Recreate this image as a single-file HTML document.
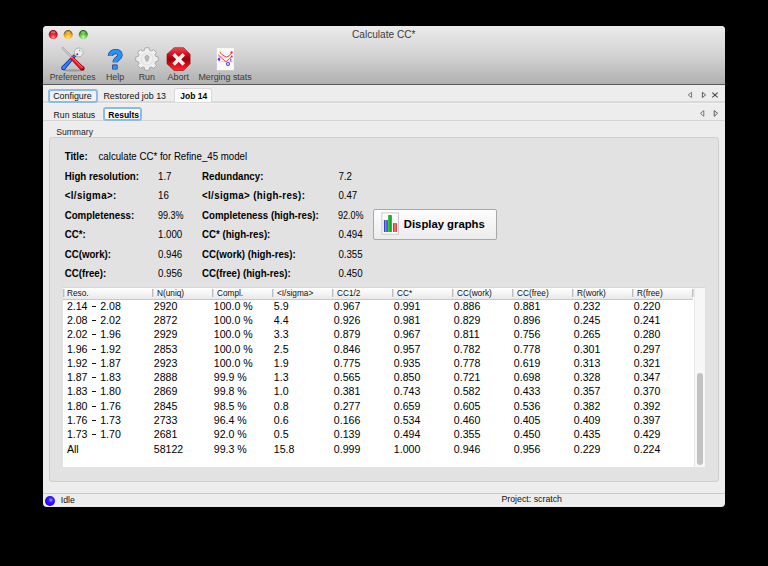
<!DOCTYPE html>
<html><head><meta charset="utf-8">
<style>
html,body{margin:0;padding:0;}
body{width:768px;height:566px;background:#000;position:relative;overflow:hidden;font-family:"Liberation Sans",sans-serif;}
.t{position:absolute;white-space:nowrap;}
.abs{position:absolute;}
#win{position:absolute;left:43px;top:26px;width:682px;height:481px;background:#ededed;border-radius:4px;overflow:hidden;}
#tb{position:absolute;left:0;top:0;width:682px;height:58px;background:linear-gradient(#ebebeb,#d3d3d3 50%,#b0b0b0);border-bottom:1px solid #5a5a5a;}
.light{position:absolute;top:4px;width:10px;height:10px;border-radius:50%;}
.sep{position:absolute;top:289px;width:2px;height:8px;background:linear-gradient(90deg,#bdbdbd 50%,#dcdcdc 50%);}
</style></head><body>
<div id="win"></div>
<div id="tb" style="left:43px;top:26px;border-radius:4px 4px 0 0;"></div>
<!-- traffic lights -->
<svg class="abs" style="left:46px;top:28px" width="44" height="13" viewBox="0 0 44 13">
  <defs>
    <radialGradient id="gr" cx="0.5" cy="0.78" r="0.62"><stop offset="0" stop-color="#ffb0b4"/><stop offset="0.45" stop-color="#ff2535"/><stop offset="0.85" stop-color="#d8101e"/><stop offset="1" stop-color="#8a1020"/></radialGradient>
    <radialGradient id="go" cx="0.5" cy="0.78" r="0.62"><stop offset="0" stop-color="#fff09a"/><stop offset="0.45" stop-color="#ffbe2a"/><stop offset="0.85" stop-color="#e0900a"/><stop offset="1" stop-color="#8a5a10"/></radialGradient>
    <radialGradient id="gg" cx="0.5" cy="0.78" r="0.62"><stop offset="0" stop-color="#d8f8b8"/><stop offset="0.45" stop-color="#72d44e"/><stop offset="0.85" stop-color="#3aa02a"/><stop offset="1" stop-color="#2a6a1c"/></radialGradient>
  </defs>
  <circle cx="7.2" cy="6.6" r="4.5" fill="url(#gr)"/>
  <ellipse cx="7.2" cy="4.3" rx="2.4" ry="1.3" fill="#ffe0e0" opacity="0.4"/>
  <circle cx="22.2" cy="6.6" r="4.5" fill="url(#go)"/>
  <ellipse cx="22.2" cy="4.3" rx="2.4" ry="1.3" fill="#fff6d0" opacity="0.4"/>
  <circle cx="37.25" cy="6.6" r="4.5" fill="url(#gg)"/>
  <ellipse cx="37.25" cy="4.3" rx="2.4" ry="1.3" fill="#eaffe0" opacity="0.4"/>
</svg>
<!-- toolbar icons -->
<svg class="abs" style="left:58px;top:44px" width="30" height="30" viewBox="0 0 30 30">
  <ellipse cx="15" cy="26.4" rx="9.5" ry="1.1" fill="#7a7a7a" opacity="0.55"/>
  <line x1="4" y1="3.4" x2="13.5" y2="13" stroke="#8c8c8c" stroke-width="1.9"/>
  <line x1="4" y1="3.4" x2="13.5" y2="13" stroke="#ffffff" stroke-width="0.9"/>
  <polygon points="15.89,10.19 3.77,22.52 7.03,25.48 18.11,12.21" fill="#0a2c9a"/>
  <circle cx="5.4" cy="24.0" r="2.2" fill="#0a2c9a"/>
  <polygon points="16.17,10.93 4.49,22.79 6.71,24.81 17.43,12.07" fill="#2f7df2"/>
  <circle cx="5.6" cy="23.8" r="1.5" fill="#3a8cff"/>
  <circle cx="20.8" cy="8.4" r="4.4" fill="#ececec" stroke="#9a9a9a" stroke-width="0.7"/>
  <polygon points="21.2,8.0 25.8,2.8 27.2,6.4" fill="#d4d4d4"/>
  <circle cx="19.3" cy="10.2" r="1.0" fill="#505050"/>
  <circle cx="21.5" cy="6.4" r="0.6" fill="#888"/>
  <polygon points="11.67,14.13 22.81,26.19 25.99,23.01 13.93,11.87" fill="#9a0010"/>
  <circle cx="24.4" cy="24.6" r="2.25" fill="#9a0010"/>
  <polygon points="12.29,13.91 23.10,25.50 25.30,23.30 13.71,12.49" fill="#ee1a2a"/>
  <line x1="13.6" y1="12.9" x2="24.8" y2="24.1" stroke="#ffb0b5" stroke-width="0.6"/>
  <line x1="12.2" y1="14.2" x2="14.2" y2="12.2" stroke="#ffd0d0" stroke-width="0.8"/>
</svg>
<svg class="abs" style="left:100px;top:44px" width="30" height="30" viewBox="0 0 30 30">
  <path d="M10.4 11.9 C10.4 6.6 20.1 6.0 20.1 10.9 C20.1 14.4 15.1 14.2 15.1 18.3" fill="none" stroke="#25307a" stroke-width="5.2"/>
  <rect x="12.2" y="20.5" width="5.4" height="5.1" rx="0.6" fill="#25307a"/>
  <path d="M10.4 11.9 C10.4 6.6 20.1 6.0 20.1 10.9 C20.1 14.4 15.1 14.2 15.1 18.3" fill="none" stroke="#2594fa" stroke-width="4.0"/>
  <rect x="12.9" y="21.2" width="4.0" height="3.7" rx="0.4" fill="#2594fa"/>
</svg>
<svg class="abs" style="left:132px;top:44px" width="30" height="30" viewBox="0 0 30 30">
  <path d="M12.37 6.39 L13.02 3.77 L16.98 3.77 L17.63 6.39 L19.23 7.05 L21.54 5.66 L24.34 8.46 L22.95 10.77 L23.61 12.37 L26.23 13.02 L26.23 16.98 L23.61 17.63 L22.95 19.23 L24.34 21.54 L21.54 24.34 L19.23 22.95 L17.63 23.61 L16.98 26.23 L13.02 26.23 L12.37 23.61 L10.77 22.95 L8.46 24.34 L5.66 21.54 L7.05 19.23 L6.39 17.63 L3.77 16.98 L3.77 13.02 L6.39 12.37 L7.05 10.77 L5.66 8.46 L8.46 5.66 L10.77 7.05 Z" fill="#efefef" stroke="#9c9c9c" stroke-width="0.8" stroke-linejoin="round"/>
  <circle cx="15" cy="15" r="6" fill="none" stroke="#e2e2e2" stroke-width="1.2"/>
  <path d="M13.0 14.0 A2.1 2.1 0 1 1 17.0 14.0 L15.8 17.2 L14.2 17.2 Z" fill="#bcbcbc" stroke="#959595" stroke-width="0.5"/>
</svg>
<svg class="abs" style="left:164px;top:44px" width="30" height="30" viewBox="0 0 30 30">
  <defs>
    <linearGradient id="ab" x1="0" y1="0" x2="0" y2="1"><stop offset="0" stop-color="#e9505a"/><stop offset="0.25" stop-color="#e01020"/><stop offset="0.5" stop-color="#9a0008"/><stop offset="0.75" stop-color="#e00a14"/><stop offset="1" stop-color="#ff2a2a"/></linearGradient>
  </defs>
  <polygon points="10.2,3.7 19.6,3.7 26.1,10.2 26.1,19.8 19.6,26.5 10.2,26.5 3.0,19.8 3.0,10.2" fill="url(#ab)" stroke="#8a0a0a" stroke-width="0.6"/>
  <path d="M9.6 10.2 L19.8 20.6 M19.8 10.2 L9.6 20.6" stroke="#f4f4f4" stroke-width="3.6"/>
</svg>
<svg class="abs" style="left:210px;top:44px" width="30" height="30" viewBox="0 0 30 30">
  <rect x="6.9" y="4" width="17" height="22.2" fill="#f9f9f9"/>
  <line x1="7.5" y1="12.8" x2="23" y2="12.8" stroke="#d0d0d0" stroke-width="0.7"/>
  <line x1="9" y1="17.6" x2="23" y2="17.6" stroke="#d0d0d0" stroke-width="0.7"/>
  <polyline points="9.8,7.6 11.5,10.2 14,11.8 16.5,13.2 19,11.8 22,8.6" fill="none" stroke="#ff2020" stroke-width="0.9"/>
  <circle cx="21.6" cy="8.4" r="1.1" fill="#ff2020"/>
  <polyline points="8.2,10.8 11,13.5 15.8,17.8 19.5,14.8 21.8,12.5" fill="none" stroke="#ff2020" stroke-width="0.9"/>
  <circle cx="21.7" cy="12.4" r="0.9" fill="#ff2020"/>
  <circle cx="9" cy="15.3" r="1.2" fill="#6030ff"/>
  <rect x="8.6" y="13.6" width="1.2" height="3.2" fill="#6030ff"/>
  <rect x="20.3" y="14.6" width="1" height="3" fill="#6030ff"/>
  <circle cx="18" cy="20" r="1.5" fill="none" stroke="#6030ff" stroke-width="1.1"/>
</svg>

<!-- toolbar labels -->

<!-- tab rows -->
<div class="abs" style="left:43px;top:101px;width:682px;height:2px;background:#dadada;"></div>
<div class="abs" style="left:43px;top:103px;width:682px;height:1px;background:#f2f2f2;"></div>
<div class="abs" style="left:43px;top:120px;width:682px;height:1px;background:#d4d4d4;"></div>
<div class="abs" style="left:48px;top:88.6px;width:49.5px;height:14px;box-sizing:border-box;border:2px solid #8dbbe8;border-radius:3px;background:#f0f0f0;"></div>
<div class="abs" style="left:173.5px;top:87.5px;width:36px;height:13.5px;background:#fdfdfd;border:1px solid #d9d9d9;border-bottom:none;border-radius:3px 3px 0 0;"></div>
<div class="abs" style="left:103px;top:107.4px;width:39.3px;height:14px;box-sizing:border-box;border:2px solid #8dbbe8;border-radius:3px;background:#fbfbfb;"></div>


<svg class="abs" style="left:680px;top:86px" width="45" height="36" viewBox="0 0 45 36">
  <path d="M11.6 6.3 L8.2 8.9 L11.6 11.6 Z" fill="none" stroke="#7a7a7a" stroke-width="1"/>
  <path d="M22.4 6.3 L25.6 8.9 L22.4 11.6 Z" fill="none" stroke="#555" stroke-width="0.95"/>
  <path d="M32.3 6.6 L37.7 11.4 M37.7 6.6 L32.3 11.4" stroke="#444" stroke-width="1.05"/>
  <path d="M23.8 24.6 L20.4 27.3 L23.8 30.3 Z" fill="none" stroke="#7a7a7a" stroke-width="1"/>
  <path d="M34.2 24.6 L37.6 27.3 L34.2 30.3 Z" fill="none" stroke="#555" stroke-width="0.95"/>
</svg>

<!-- panel -->
<div class="abs" style="left:49px;top:137px;width:668px;height:342.5px;background:#e2e2e2;border:1px solid #cfcfcf;border-radius:3px;"></div>

<div class="t" style="left:64.70px;top:152px;font-size:9.7px;line-height:9.7px;font-weight:bold;color:#000;transform-origin:0 8px;transform:scale(1,1.13);">Title:</div>
<div class="t" style="left:98.50px;top:152px;font-size:9.7px;line-height:9.7px;color:#000;transform-origin:0 8px;transform:scale(1,1.13);">calculate CC* for Refine_45 model</div>
<div class="t" style="left:64.70px;top:172px;font-size:9.7px;line-height:9.7px;font-weight:bold;color:#000;transform-origin:0 8px;transform:scale(1,1.13);">High resolution:</div>
<div class="t" style="left:158.00px;top:172px;font-size:9.7px;line-height:9.7px;color:#000;transform-origin:0 8px;transform:scale(1,1.13);">1.7</div>
<div class="t" style="left:202.00px;top:172px;font-size:9.7px;line-height:9.7px;font-weight:bold;color:#000;transform-origin:0 8px;transform:scale(1,1.13);">Redundancy:</div>
<div class="t" style="left:338.40px;top:172px;font-size:9.7px;line-height:9.7px;color:#000;transform-origin:0 8px;transform:scale(1,1.13);">7.2</div>
<div class="t" style="left:64.70px;top:191px;font-size:9.7px;line-height:9.7px;font-weight:bold;color:#000;transform-origin:0 8px;transform:scale(1,1.13);letter-spacing:0.4px;">&lt;I/sigma&gt;:</div>
<div class="t" style="left:158.00px;top:191px;font-size:9.7px;line-height:9.7px;color:#000;transform-origin:0 8px;transform:scale(1,1.13);">16</div>
<div class="t" style="left:202.00px;top:191px;font-size:9.7px;line-height:9.7px;font-weight:bold;color:#000;transform-origin:0 8px;transform:scale(1,1.13);letter-spacing:0.38px;">&lt;I/sigma&gt; (high-res):</div>
<div class="t" style="left:338.40px;top:191px;font-size:9.7px;line-height:9.7px;color:#000;transform-origin:0 8px;transform:scale(1,1.13);">0.47</div>
<div class="t" style="left:64.70px;top:211px;font-size:9.7px;line-height:9.7px;font-weight:bold;color:#000;transform-origin:0 8px;transform:scale(1,1.13);">Completeness:</div>
<div class="t" style="left:158.00px;top:211px;font-size:9.7px;line-height:9.7px;color:#000;transform-origin:0 8px;transform:scale(0.93,1.13);">99.3%</div>
<div class="t" style="left:202.00px;top:211px;font-size:9.7px;line-height:9.7px;font-weight:bold;color:#000;transform-origin:0 8px;transform:scale(1,1.13);">Completeness (high-res):</div>
<div class="t" style="left:338.40px;top:211px;font-size:9.7px;line-height:9.7px;color:#000;transform-origin:0 8px;transform:scale(0.93,1.13);">92.0%</div>
<div class="t" style="left:64.70px;top:230px;font-size:9.7px;line-height:9.7px;font-weight:bold;color:#000;transform-origin:0 8px;transform:scale(1,1.13);">CC*:</div>
<div class="t" style="left:158.00px;top:230px;font-size:9.7px;line-height:9.7px;color:#000;transform-origin:0 8px;transform:scale(1,1.13);">1.000</div>
<div class="t" style="left:202.00px;top:230px;font-size:9.7px;line-height:9.7px;font-weight:bold;color:#000;transform-origin:0 8px;transform:scale(1,1.13);">CC* (high-res):</div>
<div class="t" style="left:338.40px;top:230px;font-size:9.7px;line-height:9.7px;color:#000;transform-origin:0 8px;transform:scale(1,1.13);">0.494</div>
<div class="t" style="left:64.70px;top:250px;font-size:9.7px;line-height:9.7px;font-weight:bold;color:#000;transform-origin:0 8px;transform:scale(1,1.13);">CC(work):</div>
<div class="t" style="left:158.00px;top:250px;font-size:9.7px;line-height:9.7px;color:#000;transform-origin:0 8px;transform:scale(1,1.13);">0.946</div>
<div class="t" style="left:202.00px;top:250px;font-size:9.7px;line-height:9.7px;font-weight:bold;color:#000;transform-origin:0 8px;transform:scale(1,1.13);">CC(work) (high-res):</div>
<div class="t" style="left:338.40px;top:250px;font-size:9.7px;line-height:9.7px;color:#000;transform-origin:0 8px;transform:scale(1,1.13);">0.355</div>
<div class="t" style="left:64.70px;top:269px;font-size:9.7px;line-height:9.7px;font-weight:bold;color:#000;transform-origin:0 8px;transform:scale(1,1.13);">CC(free):</div>
<div class="t" style="left:158.00px;top:269px;font-size:9.7px;line-height:9.7px;color:#000;transform-origin:0 8px;transform:scale(1,1.13);">0.956</div>
<div class="t" style="left:202.00px;top:269px;font-size:9.7px;line-height:9.7px;font-weight:bold;color:#000;transform-origin:0 8px;transform:scale(1,1.13);">CC(free) (high-res):</div>
<div class="t" style="left:338.40px;top:269px;font-size:9.7px;line-height:9.7px;color:#000;transform-origin:0 8px;transform:scale(1,1.13);">0.450</div>


<!-- display graphs button -->
<div class="abs" style="left:373.4px;top:209px;width:121.5px;height:29px;border:1px solid #a8a8a8;border-radius:2px;background:linear-gradient(#fdfdfd,#ececec);"></div>


<svg class="abs" style="left:376px;top:208px" width="30" height="32" viewBox="0 0 30 32">
  <defs>
    <linearGradient id="bb" x1="0" x2="1"><stop offset="0" stop-color="#1a22a8"/><stop offset="0.45" stop-color="#7a8cff"/><stop offset="1" stop-color="#1a22c0"/></linearGradient>
    <linearGradient id="bg2" x1="0" x2="1"><stop offset="0" stop-color="#10b020"/><stop offset="0.3" stop-color="#30e040"/><stop offset="0.5" stop-color="#0a4a10"/><stop offset="0.7" stop-color="#30e040"/><stop offset="1" stop-color="#10b020"/></linearGradient>
    <linearGradient id="br" x1="0" x2="1"><stop offset="0" stop-color="#e00a0a"/><stop offset="0.5" stop-color="#ff8a8a"/><stop offset="1" stop-color="#e00a0a"/></linearGradient>
  </defs>
  <rect x="5.9" y="4.9" width="16.6" height="21.3" fill="#fff" stroke="#c8c8c8" stroke-width="1"/>
  <line x1="7" y1="8" x2="21.5" y2="8" stroke="#e6e6e6" stroke-width="0.6"/>
  <line x1="7" y1="12" x2="21.5" y2="12" stroke="#e6e6e6" stroke-width="0.6"/>
  <line x1="7" y1="16" x2="21.5" y2="16" stroke="#e6e6e6" stroke-width="0.6"/>
  <rect x="7.9" y="11.9" width="3.9" height="12.1" rx="0.6" fill="url(#bb)"/>
  <rect x="12.1" y="7.1" width="3.9" height="16.9" rx="0.6" fill="url(#bg2)"/>
  <rect x="17" y="15" width="3.9" height="9" rx="0.6" fill="url(#br)"/>
</svg>

<!-- table -->
<div class="abs" style="left:62.7px;top:287.5px;width:642px;height:179px;background:#fff;"></div>
<div class="abs" style="left:62.7px;top:287px;width:642px;height:1px;background:#d6d6d6;"></div>
<div class="abs" style="left:62.7px;top:288px;width:630px;height:10.5px;background:linear-gradient(#fff,#e9e9e9);border-bottom:1px solid #c8c8c8;"></div>
<div class="abs" style="left:694px;top:287.5px;width:10px;height:179px;background:#f7f7f7;border-left:1px solid #e8e8e8;"></div>
<div class="abs" style="left:697px;top:373px;width:6px;height:91.5px;background:#c2c2c2;border-radius:3px;"></div>
<div class="t" style="left:67.20px;top:289px;font-size:8.6px;line-height:8.6px;color:#111;transform-origin:0 7px;transform:scale(0.96,1.0);">Reso.</div>
<div class="sep" style="left:63.0px"></div>
<div class="t" style="left:156.70px;top:289px;font-size:8.6px;line-height:8.6px;color:#111;transform-origin:0 7px;transform:scale(0.96,1.0);">N(uniq)</div>
<div class="sep" style="left:152.3px"></div>
<div class="t" style="left:216.70px;top:289px;font-size:8.6px;line-height:8.6px;color:#111;transform-origin:0 7px;transform:scale(0.96,1.0);">Compl.</div>
<div class="sep" style="left:212.3px"></div>
<div class="t" style="left:276.70px;top:289px;font-size:8.6px;line-height:8.6px;color:#111;transform-origin:0 7px;transform:scale(0.96,1.0);">&lt;I/sigma&gt;</div>
<div class="sep" style="left:272.3px"></div>
<div class="t" style="left:336.70px;top:289px;font-size:8.6px;line-height:8.6px;color:#111;transform-origin:0 7px;transform:scale(0.96,1.0);">CC1/2</div>
<div class="sep" style="left:332.3px"></div>
<div class="t" style="left:396.70px;top:289px;font-size:8.6px;line-height:8.6px;color:#111;transform-origin:0 7px;transform:scale(0.96,1.0);">CC*</div>
<div class="sep" style="left:392.3px"></div>
<div class="t" style="left:456.70px;top:289px;font-size:8.6px;line-height:8.6px;color:#111;transform-origin:0 7px;transform:scale(0.96,1.0);">CC(work)</div>
<div class="sep" style="left:452.3px"></div>
<div class="t" style="left:516.70px;top:289px;font-size:8.6px;line-height:8.6px;color:#111;transform-origin:0 7px;transform:scale(0.96,1.0);">CC(free)</div>
<div class="sep" style="left:512.3px"></div>
<div class="t" style="left:576.70px;top:289px;font-size:8.6px;line-height:8.6px;color:#111;transform-origin:0 7px;transform:scale(0.96,1.0);">R(work)</div>
<div class="sep" style="left:572.3px"></div>
<div class="t" style="left:636.70px;top:289px;font-size:8.6px;line-height:8.6px;color:#111;transform-origin:0 7px;transform:scale(0.96,1.0);">R(free)</div>
<div class="sep" style="left:632.3px"></div>
<div class="sep" style="left:691.6px"></div>
<div class="t" style="left:66.90px;top:301px;font-size:10.6px;line-height:10.6px;color:#000;">2.14<span style="display:inline-block;width:4.3px;height:1.2px;background:#111;vertical-align:3.1px;margin:0 4.3px 0 4.1px"></span>2.08</div>
<div class="t" style="left:153.80px;top:301px;font-size:10.6px;line-height:10.6px;color:#000;">2920</div>
<div class="t" style="left:213.80px;top:301px;font-size:10.6px;line-height:10.6px;color:#000;">100.0 %</div>
<div class="t" style="left:273.80px;top:301px;font-size:10.6px;line-height:10.6px;color:#000;">5.9</div>
<div class="t" style="left:333.80px;top:301px;font-size:10.6px;line-height:10.6px;color:#000;">0.967</div>
<div class="t" style="left:393.80px;top:301px;font-size:10.6px;line-height:10.6px;color:#000;">0.991</div>
<div class="t" style="left:453.80px;top:301px;font-size:10.6px;line-height:10.6px;color:#000;">0.886</div>
<div class="t" style="left:513.80px;top:301px;font-size:10.6px;line-height:10.6px;color:#000;">0.881</div>
<div class="t" style="left:573.80px;top:301px;font-size:10.6px;line-height:10.6px;color:#000;">0.232</div>
<div class="t" style="left:633.80px;top:301px;font-size:10.6px;line-height:10.6px;color:#000;">0.220</div>
<div class="t" style="left:66.90px;top:315px;font-size:10.6px;line-height:10.6px;color:#000;">2.08<span style="display:inline-block;width:4.3px;height:1.2px;background:#111;vertical-align:3.1px;margin:0 4.3px 0 4.1px"></span>2.02</div>
<div class="t" style="left:153.80px;top:315px;font-size:10.6px;line-height:10.6px;color:#000;">2872</div>
<div class="t" style="left:213.80px;top:315px;font-size:10.6px;line-height:10.6px;color:#000;">100.0 %</div>
<div class="t" style="left:273.80px;top:315px;font-size:10.6px;line-height:10.6px;color:#000;">4.4</div>
<div class="t" style="left:333.80px;top:315px;font-size:10.6px;line-height:10.6px;color:#000;">0.926</div>
<div class="t" style="left:393.80px;top:315px;font-size:10.6px;line-height:10.6px;color:#000;">0.981</div>
<div class="t" style="left:453.80px;top:315px;font-size:10.6px;line-height:10.6px;color:#000;">0.829</div>
<div class="t" style="left:513.80px;top:315px;font-size:10.6px;line-height:10.6px;color:#000;">0.896</div>
<div class="t" style="left:573.80px;top:315px;font-size:10.6px;line-height:10.6px;color:#000;">0.245</div>
<div class="t" style="left:633.80px;top:315px;font-size:10.6px;line-height:10.6px;color:#000;">0.241</div>
<div class="t" style="left:66.90px;top:329px;font-size:10.6px;line-height:10.6px;color:#000;">2.02<span style="display:inline-block;width:4.3px;height:1.2px;background:#111;vertical-align:3.1px;margin:0 4.3px 0 4.1px"></span>1.96</div>
<div class="t" style="left:153.80px;top:329px;font-size:10.6px;line-height:10.6px;color:#000;">2929</div>
<div class="t" style="left:213.80px;top:329px;font-size:10.6px;line-height:10.6px;color:#000;">100.0 %</div>
<div class="t" style="left:273.80px;top:329px;font-size:10.6px;line-height:10.6px;color:#000;">3.3</div>
<div class="t" style="left:333.80px;top:329px;font-size:10.6px;line-height:10.6px;color:#000;">0.879</div>
<div class="t" style="left:393.80px;top:329px;font-size:10.6px;line-height:10.6px;color:#000;">0.967</div>
<div class="t" style="left:453.80px;top:329px;font-size:10.6px;line-height:10.6px;color:#000;">0.811</div>
<div class="t" style="left:513.80px;top:329px;font-size:10.6px;line-height:10.6px;color:#000;">0.756</div>
<div class="t" style="left:573.80px;top:329px;font-size:10.6px;line-height:10.6px;color:#000;">0.265</div>
<div class="t" style="left:633.80px;top:329px;font-size:10.6px;line-height:10.6px;color:#000;">0.280</div>
<div class="t" style="left:66.90px;top:344px;font-size:10.6px;line-height:10.6px;color:#000;">1.96<span style="display:inline-block;width:4.3px;height:1.2px;background:#111;vertical-align:3.1px;margin:0 4.3px 0 4.1px"></span>1.92</div>
<div class="t" style="left:153.80px;top:344px;font-size:10.6px;line-height:10.6px;color:#000;">2853</div>
<div class="t" style="left:213.80px;top:344px;font-size:10.6px;line-height:10.6px;color:#000;">100.0 %</div>
<div class="t" style="left:273.80px;top:344px;font-size:10.6px;line-height:10.6px;color:#000;">2.5</div>
<div class="t" style="left:333.80px;top:344px;font-size:10.6px;line-height:10.6px;color:#000;">0.846</div>
<div class="t" style="left:393.80px;top:344px;font-size:10.6px;line-height:10.6px;color:#000;">0.957</div>
<div class="t" style="left:453.80px;top:344px;font-size:10.6px;line-height:10.6px;color:#000;">0.782</div>
<div class="t" style="left:513.80px;top:344px;font-size:10.6px;line-height:10.6px;color:#000;">0.778</div>
<div class="t" style="left:573.80px;top:344px;font-size:10.6px;line-height:10.6px;color:#000;">0.301</div>
<div class="t" style="left:633.80px;top:344px;font-size:10.6px;line-height:10.6px;color:#000;">0.297</div>
<div class="t" style="left:66.90px;top:358px;font-size:10.6px;line-height:10.6px;color:#000;">1.92<span style="display:inline-block;width:4.3px;height:1.2px;background:#111;vertical-align:3.1px;margin:0 4.3px 0 4.1px"></span>1.87</div>
<div class="t" style="left:153.80px;top:358px;font-size:10.6px;line-height:10.6px;color:#000;">2923</div>
<div class="t" style="left:213.80px;top:358px;font-size:10.6px;line-height:10.6px;color:#000;">100.0 %</div>
<div class="t" style="left:273.80px;top:358px;font-size:10.6px;line-height:10.6px;color:#000;">1.9</div>
<div class="t" style="left:333.80px;top:358px;font-size:10.6px;line-height:10.6px;color:#000;">0.775</div>
<div class="t" style="left:393.80px;top:358px;font-size:10.6px;line-height:10.6px;color:#000;">0.935</div>
<div class="t" style="left:453.80px;top:358px;font-size:10.6px;line-height:10.6px;color:#000;">0.778</div>
<div class="t" style="left:513.80px;top:358px;font-size:10.6px;line-height:10.6px;color:#000;">0.619</div>
<div class="t" style="left:573.80px;top:358px;font-size:10.6px;line-height:10.6px;color:#000;">0.313</div>
<div class="t" style="left:633.80px;top:358px;font-size:10.6px;line-height:10.6px;color:#000;">0.321</div>
<div class="t" style="left:66.90px;top:372px;font-size:10.6px;line-height:10.6px;color:#000;">1.87<span style="display:inline-block;width:4.3px;height:1.2px;background:#111;vertical-align:3.1px;margin:0 4.3px 0 4.1px"></span>1.83</div>
<div class="t" style="left:153.80px;top:372px;font-size:10.6px;line-height:10.6px;color:#000;">2888</div>
<div class="t" style="left:213.80px;top:372px;font-size:10.6px;line-height:10.6px;color:#000;">99.9 %</div>
<div class="t" style="left:273.80px;top:372px;font-size:10.6px;line-height:10.6px;color:#000;">1.3</div>
<div class="t" style="left:333.80px;top:372px;font-size:10.6px;line-height:10.6px;color:#000;">0.565</div>
<div class="t" style="left:393.80px;top:372px;font-size:10.6px;line-height:10.6px;color:#000;">0.850</div>
<div class="t" style="left:453.80px;top:372px;font-size:10.6px;line-height:10.6px;color:#000;">0.721</div>
<div class="t" style="left:513.80px;top:372px;font-size:10.6px;line-height:10.6px;color:#000;">0.698</div>
<div class="t" style="left:573.80px;top:372px;font-size:10.6px;line-height:10.6px;color:#000;">0.328</div>
<div class="t" style="left:633.80px;top:372px;font-size:10.6px;line-height:10.6px;color:#000;">0.347</div>
<div class="t" style="left:66.90px;top:386px;font-size:10.6px;line-height:10.6px;color:#000;">1.83<span style="display:inline-block;width:4.3px;height:1.2px;background:#111;vertical-align:3.1px;margin:0 4.3px 0 4.1px"></span>1.80</div>
<div class="t" style="left:153.80px;top:386px;font-size:10.6px;line-height:10.6px;color:#000;">2869</div>
<div class="t" style="left:213.80px;top:386px;font-size:10.6px;line-height:10.6px;color:#000;">99.8 %</div>
<div class="t" style="left:273.80px;top:386px;font-size:10.6px;line-height:10.6px;color:#000;">1.0</div>
<div class="t" style="left:333.80px;top:386px;font-size:10.6px;line-height:10.6px;color:#000;">0.381</div>
<div class="t" style="left:393.80px;top:386px;font-size:10.6px;line-height:10.6px;color:#000;">0.743</div>
<div class="t" style="left:453.80px;top:386px;font-size:10.6px;line-height:10.6px;color:#000;">0.582</div>
<div class="t" style="left:513.80px;top:386px;font-size:10.6px;line-height:10.6px;color:#000;">0.433</div>
<div class="t" style="left:573.80px;top:386px;font-size:10.6px;line-height:10.6px;color:#000;">0.357</div>
<div class="t" style="left:633.80px;top:386px;font-size:10.6px;line-height:10.6px;color:#000;">0.370</div>
<div class="t" style="left:66.90px;top:401px;font-size:10.6px;line-height:10.6px;color:#000;">1.80<span style="display:inline-block;width:4.3px;height:1.2px;background:#111;vertical-align:3.1px;margin:0 4.3px 0 4.1px"></span>1.76</div>
<div class="t" style="left:153.80px;top:401px;font-size:10.6px;line-height:10.6px;color:#000;">2845</div>
<div class="t" style="left:213.80px;top:401px;font-size:10.6px;line-height:10.6px;color:#000;">98.5 %</div>
<div class="t" style="left:273.80px;top:401px;font-size:10.6px;line-height:10.6px;color:#000;">0.8</div>
<div class="t" style="left:333.80px;top:401px;font-size:10.6px;line-height:10.6px;color:#000;">0.277</div>
<div class="t" style="left:393.80px;top:401px;font-size:10.6px;line-height:10.6px;color:#000;">0.659</div>
<div class="t" style="left:453.80px;top:401px;font-size:10.6px;line-height:10.6px;color:#000;">0.605</div>
<div class="t" style="left:513.80px;top:401px;font-size:10.6px;line-height:10.6px;color:#000;">0.536</div>
<div class="t" style="left:573.80px;top:401px;font-size:10.6px;line-height:10.6px;color:#000;">0.382</div>
<div class="t" style="left:633.80px;top:401px;font-size:10.6px;line-height:10.6px;color:#000;">0.392</div>
<div class="t" style="left:66.90px;top:415px;font-size:10.6px;line-height:10.6px;color:#000;">1.76<span style="display:inline-block;width:4.3px;height:1.2px;background:#111;vertical-align:3.1px;margin:0 4.3px 0 4.1px"></span>1.73</div>
<div class="t" style="left:153.80px;top:415px;font-size:10.6px;line-height:10.6px;color:#000;">2733</div>
<div class="t" style="left:213.80px;top:415px;font-size:10.6px;line-height:10.6px;color:#000;">96.4 %</div>
<div class="t" style="left:273.80px;top:415px;font-size:10.6px;line-height:10.6px;color:#000;">0.6</div>
<div class="t" style="left:333.80px;top:415px;font-size:10.6px;line-height:10.6px;color:#000;">0.166</div>
<div class="t" style="left:393.80px;top:415px;font-size:10.6px;line-height:10.6px;color:#000;">0.534</div>
<div class="t" style="left:453.80px;top:415px;font-size:10.6px;line-height:10.6px;color:#000;">0.460</div>
<div class="t" style="left:513.80px;top:415px;font-size:10.6px;line-height:10.6px;color:#000;">0.405</div>
<div class="t" style="left:573.80px;top:415px;font-size:10.6px;line-height:10.6px;color:#000;">0.409</div>
<div class="t" style="left:633.80px;top:415px;font-size:10.6px;line-height:10.6px;color:#000;">0.397</div>
<div class="t" style="left:66.90px;top:429px;font-size:10.6px;line-height:10.6px;color:#000;">1.73<span style="display:inline-block;width:4.3px;height:1.2px;background:#111;vertical-align:3.1px;margin:0 4.3px 0 4.1px"></span>1.70</div>
<div class="t" style="left:153.80px;top:429px;font-size:10.6px;line-height:10.6px;color:#000;">2681</div>
<div class="t" style="left:213.80px;top:429px;font-size:10.6px;line-height:10.6px;color:#000;">92.0 %</div>
<div class="t" style="left:273.80px;top:429px;font-size:10.6px;line-height:10.6px;color:#000;">0.5</div>
<div class="t" style="left:333.80px;top:429px;font-size:10.6px;line-height:10.6px;color:#000;">0.139</div>
<div class="t" style="left:393.80px;top:429px;font-size:10.6px;line-height:10.6px;color:#000;">0.494</div>
<div class="t" style="left:453.80px;top:429px;font-size:10.6px;line-height:10.6px;color:#000;">0.355</div>
<div class="t" style="left:513.80px;top:429px;font-size:10.6px;line-height:10.6px;color:#000;">0.450</div>
<div class="t" style="left:573.80px;top:429px;font-size:10.6px;line-height:10.6px;color:#000;">0.435</div>
<div class="t" style="left:633.80px;top:429px;font-size:10.6px;line-height:10.6px;color:#000;">0.429</div>
<div class="t" style="left:66.90px;top:444px;font-size:10.6px;line-height:10.6px;color:#000;">All</div>
<div class="t" style="left:153.80px;top:444px;font-size:10.6px;line-height:10.6px;color:#000;">58122</div>
<div class="t" style="left:213.80px;top:444px;font-size:10.6px;line-height:10.6px;color:#000;">99.3 %</div>
<div class="t" style="left:273.80px;top:444px;font-size:10.6px;line-height:10.6px;color:#000;">15.8</div>
<div class="t" style="left:333.80px;top:444px;font-size:10.6px;line-height:10.6px;color:#000;">0.999</div>
<div class="t" style="left:393.80px;top:444px;font-size:10.6px;line-height:10.6px;color:#000;">1.000</div>
<div class="t" style="left:453.80px;top:444px;font-size:10.6px;line-height:10.6px;color:#000;">0.946</div>
<div class="t" style="left:513.80px;top:444px;font-size:10.6px;line-height:10.6px;color:#000;">0.956</div>
<div class="t" style="left:573.80px;top:444px;font-size:10.6px;line-height:10.6px;color:#000;">0.229</div>
<div class="t" style="left:633.80px;top:444px;font-size:10.6px;line-height:10.6px;color:#000;">0.224</div>


<!-- status bar -->
<div class="abs" style="left:43px;top:493px;width:682px;height:1px;background:#c8c8c8;"></div>
<div class="abs" style="left:45.4px;top:495.9px;width:9.8px;height:9.8px;border-radius:50%;background:radial-gradient(circle at 58% 40%,#9a9aff 0,#3a18ff 30%,#2a00d8 70%,#1a0088 100%);"></div>
<div class="t" style="left:352.00px;top:30px;font-size:10.1px;line-height:10.1px;color:#3c3c3c;">Calculate CC*</div>
<div class="t" style="left:49.70px;top:73px;font-size:8.5px;line-height:8.5px;color:#3a3a3a;transform-origin:0 7px;transform:scale(1,1.08);">Preferences</div>
<div class="t" style="left:106.00px;top:73px;font-size:8.8px;line-height:8.8px;color:#3a3a3a;transform-origin:0 7px;transform:scale(1,1.08);">Help</div>
<div class="t" style="left:138.70px;top:73px;font-size:8.8px;line-height:8.8px;color:#3a3a3a;transform-origin:0 7px;transform:scale(1,1.08);">Run</div>
<div class="t" style="left:167.60px;top:73px;font-size:9px;line-height:9px;color:#3a3a3a;transform-origin:0 7px;transform:scale(1,1.08);">Abort</div>
<div class="t" style="left:198.40px;top:73px;font-size:8.9px;line-height:8.9px;color:#3a3a3a;transform-origin:0 7px;transform:scale(1,1.08);">Merging stats</div>
<div class="t" style="left:53.20px;top:92px;font-size:8.9px;line-height:8.9px;color:#111;transform-origin:0 7px;transform:scale(1,1.08);">Configure</div>
<div class="t" style="left:103.40px;top:92px;font-size:8.9px;line-height:8.9px;color:#111;transform-origin:0 7px;transform:scale(1,1.08);">Restored job 13</div>
<div class="t" style="left:180.30px;top:92px;font-size:8.5px;line-height:8.5px;font-weight:bold;color:#000;transform-origin:0 7px;transform:scale(1,1.08);">Job 14</div>
<div class="t" style="left:53.60px;top:111px;font-size:8.7px;line-height:8.7px;color:#111;transform-origin:0 7px;transform:scale(1,1.08);">Run status</div>
<div class="t" style="left:108.30px;top:111px;font-size:8.5px;line-height:8.5px;font-weight:bold;color:#000;transform-origin:0 7px;transform:scale(1,1.08);">Results</div>
<div class="t" style="left:56.20px;top:128px;font-size:8.6px;line-height:8.6px;color:#222;transform-origin:0 7px;transform:scale(1,1.1);">Summary</div>
<div class="t" style="left:403.80px;top:219px;font-size:11.3px;line-height:11.3px;font-weight:bold;color:#000;">Display graphs</div>
<div class="t" style="left:60.80px;top:496px;font-size:8.7px;line-height:8.7px;color:#111;">Idle</div>
<div class="t" style="left:501.40px;top:495px;font-size:8.8px;line-height:8.8px;color:#111;">Project: scratch</div>

</body></html>
